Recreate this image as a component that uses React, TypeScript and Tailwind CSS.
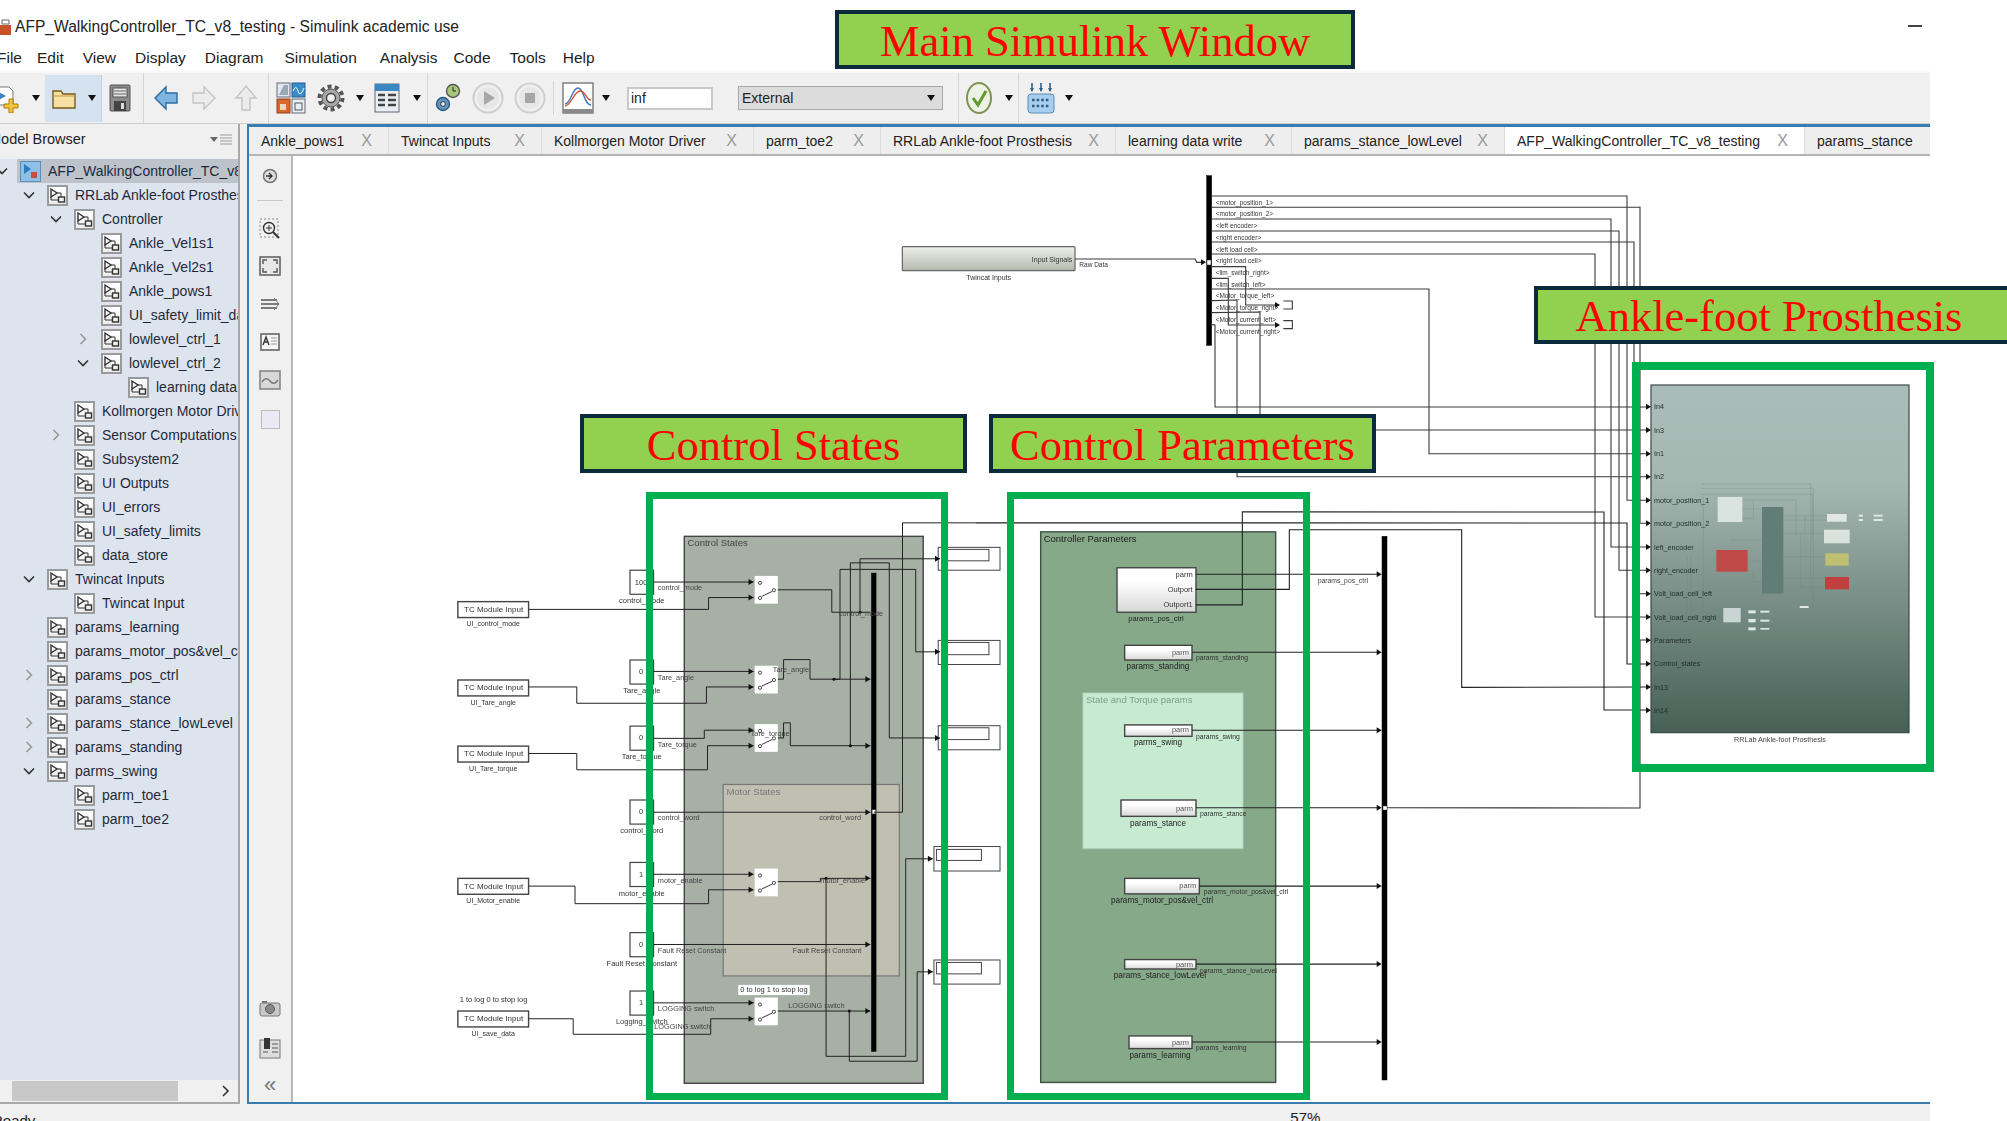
import React from "react";

type P = [number, number];
const z4 = (x: number, y: number): P => [440 + x / 2.8, 480 + y / 2.45];
const z5 = (x: number, y: number): P => [1000 + x / 3, 480 + y / 2.45];
const z6 = (x: number, y: number): P => [1600 + x / 3, 360 + y / 3];
const z9 = (x: number, y: number): P => [880 + x / 3, 170 + y / 3];

const Wire = ({ pts, color = "#3a3a3a", w = 1.1 }: { pts: P[]; color?: string; w?: number }) => (
  <polyline points={pts.map((p) => p.join(",")).join(" ")} fill="none" stroke={color} strokeWidth={w} />
);
const Arrow = ({ at }: { at: P }) => (
  <polygon points={`${at[0]},${at[1]} ${at[0] - 5},${at[1] - 3} ${at[0] - 5},${at[1] + 3}`} fill="#111" />
);
const Dot = ({ at }: { at: P }) => <circle cx={at[0]} cy={at[1]} r={1.5} fill="#111" />;
const T = ({ at, s = 7.5, a = "start", c = "#333", children }: { at: P; s?: number; a?: "start" | "middle" | "end"; c?: string; children: React.ReactNode }) => (
  <text x={at[0]} y={at[1]} fontSize={s} textAnchor={a} fill={c} dominantBaseline="central">{children}</text>
);
const Box = ({ a, b, fill = "#fff", stroke = "#444", w = 1.2, r = 0 }: { a: P; b: P; fill?: string; stroke?: string; w?: number; r?: number }) => (
  <rect x={a[0]} y={a[1]} width={b[0] - a[0]} height={b[1] - a[1]} fill={fill} stroke={stroke} strokeWidth={w} rx={r} />
);

const tcBlocks: [number, string][] = [
  [298, "UI_control_mode"], [490, "UI_Tare_angle"], [652, "UI_Tare_torque"], [976, "UI_Motor_enable"], [1301, "UI_save_data"],
];
const constants: [number, string, string][] = [
  [221, "100", "control_mode"], [441, "0", "Tare_angle"], [603, "0", "Tare_torque"], [784, "0", "control_word"],
  [937, "1", "motor_enable"], [1109, "0", "Fault Reset Constant"], [1252, "1", "Logging_switch"],
];
const switches = [235, 455, 598, 952, 1268];

const wires4: P[][] = [
  [[598, 250], [878, 250]],
  [[248, 317], [752, 317], [752, 288], [878, 288]],
  [[946, 269], [1097, 269], [1097, 324], [1205, 324]],
  [[598, 469], [878, 469]],
  [[248, 507], [383, 507], [383, 547], [746, 547], [746, 507], [878, 507]],
  [[946, 488], [962, 488], [962, 440], [1036, 440], [1036, 488], [1205, 488]],
  [[598, 633], [740, 633], [740, 613], [878, 613]],
  [[248, 670], [383, 670], [383, 710], [749, 710], [749, 651], [878, 651]],
  [[946, 632], [962, 632], [962, 595], [981, 595], [981, 651], [1205, 651]],
  [[598, 814], [1205, 814]],
  [[1215, 814], [1295, 814], [1295, 105], [1500, 105]],
  [[1176, 324], [1176, 193], [1400, 193]],
  [[1103, 488], [1120, 488], [1120, 219], [1332, 219], [1332, 421], [1400, 421]],
  [[1149, 651], [1149, 203], [1258, 203], [1258, 632], [1400, 632]],
  [[598, 966], [878, 966]],
  [[248, 995], [378, 995], [378, 1038], [752, 1038], [752, 1004], [878, 1004]],
  [[946, 984], [1065, 984], [1065, 976], [1205, 976]],
  [[1081, 976], [1081, 1412], [1304, 1412], [1304, 928], [1380, 928]],
  [[598, 1138], [1205, 1138]],
  [[598, 1281], [878, 1281]],
  [[248, 1320], [373, 1320], [373, 1358], [758, 1358], [758, 1320], [878, 1320]],
  [[946, 1301], [1205, 1301]],
  [[1146, 1301], [1146, 1424], [1336, 1424], [1336, 1205], [1380, 1205]],
];
const arrows4: P[] = [
  [878, 250], [878, 288], [878, 469], [878, 507], [878, 613], [878, 651], [878, 966], [878, 1004], [878, 1281], [878, 1320],
  [1205, 488], [1205, 651], [1205, 814], [1205, 976], [1205, 1138], [1205, 1301], [1400, 193], [1400, 421], [1400, 632], [1380, 928], [1380, 1205],
];
const dots4: P[] = [[1176, 324], [1103, 488], [1149, 651], [1081, 976], [1146, 1301]];
const labels4: [number, number, string][] = [
  [610, 264, "control_mode"], [1117, 326, "control_mode"], [610, 483, "Tare_angle"], [932, 465, "Tare_angle"],
  [610, 647, "Tare_torque"], [870, 622, "Tare_torque"], [610, 828, "control_word"], [1062, 828, "control_word"],
  [610, 980, "motor_enable"], [1065, 980, "motor_enable"], [610, 1153, "Fault Reset Constant"], [988, 1153, "Fault Reset Constant"],
  [610, 1295, "LOGGING switch"], [600, 1338, "LOGGING switch"], [975, 1287, "LOGGING switch"],
];
const displays: [number, number, number, number, number][] = [
  [1395, 165, 221, 170, 198], [1395, 393, 452, 398, 428], [1395, 602, 661, 607, 636], [1383, 898, 958, 905, 932], [1383, 1176, 1235, 1182, 1210],
];

const paramBlocks: [number, number, number, number, number, string, number, number, number, string, number, number][] = [
  [374, 576, 405, 441, 423, "params_standing", 474, 456, 422, "params_standing", 588, 436],
  [374, 576, 600, 628, 612, "parms_swing", 474, 643, 613, "params_swing", 588, 628],
  [363, 588, 784, 824, 804, "params_stance", 474, 841, 803, "params_stance", 600, 818],
  [374, 598, 976, 1014, 994, "params_motor_pos&vel_ctrl", 486, 1030, 995, "params_motor_pos&vel_ctrl", 611, 1009],
  [374, 588, 1175, 1198, 1186, "params_stance_lowLevel", 480, 1214, 1186, "params_stance_lowLevel", 600, 1201],
  [387, 576, 1362, 1393, 1378, "params_learning", 480, 1409, 1377, "params_learning", 588, 1391],
];

const inputs: [number, string][] = [
  [140, "In4"], [210, "In3"], [281, "In1"], [350, "In2"], [421, "motor_position_1"], [490, "motor_position_2"], [561, "left_encoder"],
  [631, "right_encoder"], [701, "Volt_load_cell_left"], [771, "Volt_load_cell_right"], [841, "Parameters"], [911, "Control_states"], [981, "In13"], [1051, "In14"],
];
const busSignals: [number, string][] = [
  [97, "<motor_position_1>"], [130, "<motor_position_2>"], [166, "<left encoder>"], [202, "<right encoder>"], [238, "<left load cell>"], [271, "<right load cell>"],
  [306, "<lim_switch_right>"], [342, "<lim_switch_left>"], [375, "<Motor_torque_left>"], [411, "<Motor_torque_right>"], [447, "<Motor_current_left>"], [483, "<Motor_current_right>"],
];
const innerRects: [number, number, number, number, string][] = [
  [353, 411, 427, 486, "#dbe3e0"], [486, 441, 550, 701, "#627d76"], [349, 570, 443, 635, "#c04a48"], [681, 462, 740, 485, "#e1e8e4"],
  [672, 509, 749, 550, "#d9e2dd"], [676, 580, 746, 617, "#c0bf72"], [675, 651, 747, 688, "#c04040"], [370, 744, 422, 787, "#c9d5d2"],
  [445, 751, 467, 760, "#dfe7e3"], [481, 752, 508, 758, "#dfe7e3"], [445, 777, 467, 787, "#dfe7e3"], [481, 779, 508, 785, "#dfe7e3"],
  [445, 802, 467, 811, "#dfe7e3"], [481, 804, 508, 809, "#dfe7e3"], [776, 464, 789, 470, "#dfe7e3"], [776, 477, 789, 483, "#dfe7e3"],
  [821, 464, 848, 470, "#dfe7e3"], [821, 477, 848, 483, "#dfe7e3"], [599, 738, 626, 744, "#dfe7e3"],
];
const faint: P[][] = [
  [[305, 372], [632, 372], [632, 690]], [[305, 385], [640, 385], [640, 740], [626, 740]], [[305, 403], [637, 403], [637, 545]], [[427, 420], [588, 420], [588, 530]],
  [[427, 475], [460, 475], [460, 420]], [[310, 410], [310, 750], [370, 750]], [[262, 590], [262, 800], [445, 805]], [[272, 590], [272, 780], [445, 780]],
  [[550, 468], [681, 468]], [[550, 480], [681, 480]], [[550, 520], [672, 520]], [[550, 590], [676, 590]], [[550, 655], [675, 655]], [[443, 603], [486, 603]],
  [[390, 540], [486, 540]], [[427, 447], [486, 447]], [[460, 635], [460, 665], [486, 665]], [[602, 520], [602, 682], [675, 682]], [[615, 465], [615, 580]],
];

function Diagram() {
  return (
    <svg viewBox="293 156 1637 946" className="block w-full h-full blur-[0.4px]" fontFamily="'Liberation Sans', Arial, sans-serif">
      <defs>
        <linearGradient id="tw" x1="0" y1="0" x2="0" y2="1"><stop offset="0" stopColor="#eef0ea" /><stop offset="1" stopColor="#b4b8ac" /></linearGradient>
        <linearGradient id="ps" x1="0" y1="0" x2="0" y2="1"><stop offset="0" stopColor="#abbdb8" /><stop offset="0.28" stopColor="#a5b7b1" /><stop offset="1" stopColor="#466056" /></linearGradient>
        <linearGradient id="wb" x1="0" y1="0" x2="0" y2="1"><stop offset="0.3" stopColor="#ffffff" /><stop offset="1" stopColor="#d6d8d6" /></linearGradient>
      </defs>
      <Box a={z9(67, 230)} b={z9(585, 302)} fill="url(#tw)" stroke="#666" r={1} />
      <T at={z9(577, 268)} a="end" s={7}>Input Signals</T>
      <T at={z9(326, 322)} a="middle" s={7}>Twincat Inputs</T>
      <T at={z9(598, 284)} s={6.5}>Raw Data</T>
      <Wire pts={[z9(585, 267), z9(945, 267), z9(950, 277), z9(975, 277)]} />
      <Arrow at={z9(978, 277)} />
      <Box a={z9(980, 17)} b={z9(995, 526)} fill="#000" stroke="#000" w={0.5} />
      <rect x={1207} y={260} width={4} height={5} fill="#fff" stroke="#333" strokeWidth={0.5} />
      {busSignals.map(([y, s]) => <T key={s} at={z9(1007, y)} s={6.5}>{s}</T>)}
      <Wire pts={[[1212, 196], [1627, 196], [1627, 500.3], [1646, 500.3]]} />
      <Wire pts={[[1212, 207.3], [1640, 207.3], [1640, 523.3], [1646, 523.3]]} />
      <Wire pts={[[1212, 219], [1611, 219], [1611, 547], [1646, 547]]} />
      <Wire pts={[[1212, 231], [1619, 231], [1619, 570.3], [1646, 570.3]]} />
      <Wire pts={[[1212, 242], [1634, 242], [1634, 593.7], [1646, 593.7]]} />
      <Wire pts={[[1212, 254], [1595, 254], [1595, 617], [1646, 617]]} />
      <Wire pts={[z9(995, 357), [1429, 289], [1429, 453.7], [1646, 453.7]]} />
      <Wire pts={[z9(995, 392), [1237, 300], [1237, 476.7], [1646, 476.7]]} />
      <Wire pts={[z9(995, 428), [1260, 312], [1260, 430], [1646, 430]]} />
      <Wire pts={[z9(995, 464), [1215, 325], [1215, 407], [1646, 407]]} />
      <Wire pts={[z9(995, 290), z9(1097, 290), z9(1097, 405), z9(1190, 405)]} />
      <Wire pts={[z9(995, 325), z9(1045, 325), z9(1045, 465), z9(1190, 465)]} />
      <Arrow at={z9(1200, 405)} /><Arrow at={z9(1200, 465)} />
      <Wire pts={[z9(1210, 393), z9(1237, 393), z9(1237, 417), z9(1210, 417)]} />
      <Wire pts={[z9(1210, 452), z9(1237, 452), z9(1237, 476), z9(1210, 476)]} />

      {displays.map(([x, y1, y2, i1, i2]) => (
        <g key={y1}>
          <Box a={z4(x, y1)} b={z4(1568, y2)} w={1} />
          <Box a={z4(x === 1395 ? 1420 : 1390, i1)} b={z4(x === 1395 ? 1537 : 1516, i2)} w={1} />
        </g>
      ))}
      <Box a={z4(684, 138)} b={z4(1353, 1478)} fill="#a6b0a5" stroke="#444" w={1.4} />
      <T at={z4(693, 153)} s={9.5} c="#444">Control States</T>
      <Box a={z4(793, 746)} b={z4(1286, 1215)} fill="#c0c0b2" stroke="#777" />
      <T at={z4(802, 762)} s={9.5} c="#777">Motor States</T>
      {tcBlocks.map(([y, l]) => (
        <g key={l}>
          <Box a={z4(50, y)} b={z4(248, y + 39)} w={1.4} />
          <T at={z4(150, y + 19)} a="middle" s={8}>TC Module Input</T>
          <T at={z4(149, y + 54)} a="middle" s={7}>{l}</T>
        </g>
      ))}
      <T at={z4(150, 1273)} a="middle" s={7.5}>1 to log 0 to stop log</T>
      {constants.map(([y, v, l]) => (
        <g key={l}>
          <Box a={z4(532, y)} b={z4(598, y + 59)} w={1.2} />
          <T at={z4(563, y + 29)} a="middle" s={7.5}>{v}</T>
          <T at={z4(565, y + 75)} a="middle" s={7.5}>{l}</T>
        </g>
      ))}
      {switches.map((y) => (
        <g key={y}>
          <Box a={z4(881, y)} b={z4(946, y + 68)} stroke="#fff" w={0} />
          <circle cx={z4(896, 0)[0]} cy={z4(0, y + 17)[1]} r={1.6} fill="#fff" stroke="#222" strokeWidth={0.8} />
          <circle cx={z4(896, 0)[0]} cy={z4(0, y + 54)[1]} r={1.6} fill="#fff" stroke="#222" strokeWidth={0.8} />
          <circle cx={z4(935, 0)[0]} cy={z4(0, y + 35)[1]} r={1.6} fill="#fff" stroke="#222" strokeWidth={0.8} />
          <Wire pts={[z4(901, y + 50), z4(930, y + 38)]} color="#222" w={0.9} />
        </g>
      ))}
      <Box a={z4(835, 1237)} b={z4(1035, 1262)} stroke="#fff" w={0} />
      <T at={z4(935, 1249)} a="middle" s={7.5}>0 to log 1 to stop log</T>
      <Box a={z4(1208, 228)} b={z4(1221, 1400)} fill="#000" stroke="#000" w={0.5} />
      <rect x={z4(1210, 0)[0]} y={z4(0, 808)[1]} width={3.5} height={4} fill="#fff" stroke="#444" strokeWidth={0.4} />
      {wires4.map((w, i) => <Wire key={i} pts={w.map(([x, y]) => z4(x, y))} w={1} color="#222" />)}
      {arrows4.map(([x, y], i) => <Arrow key={i} at={z4(x, y)} />)}
      {dots4.map(([x, y], i) => <Dot key={i} at={z4(x, y)} />)}
      {labels4.map(([x, y, l], i) => <T key={i} at={z4(x, y)} s={7.3} c="#444">{l}</T>)}

      <Box a={z5(122, 127)} b={z5(827, 1476)} fill="#86a98a" stroke="#3d5240" w={1.4} />
      <T at={z5(131, 143)} s={9.5} c="#222">Controller Parameters</T>
      <Box a={z5(248, 521)} b={z5(730, 904)} fill="#c6ebd0" stroke="#9cb9a4" w={1} />
      <T at={z5(258, 538)} s={9.5} c="#7f9e8c">State and Torque params</T>
      <Box a={z5(351, 215)} b={z5(588, 324)} fill="url(#wb)" w={1.4} />
      <T at={z5(578, 231)} a="end" s={7.5}>parm</T>
      <T at={z5(578, 268)} a="end" s={7.5}>Outport</T>
      <T at={z5(578, 305)} a="end" s={7.5}>Outport1</T>
      <T at={z5(468, 339)} a="middle" s={7.5} c="#222">params_pos_ctrl</T>
      <Wire pts={[z5(587, 231), z5(1140, 231)]} color="#222" />
      <Wire pts={[z5(587, 268), z5(868, 268), z5(868, 122), z5(1385, 122), z5(1385, 508), [1646, 687]]} color="#222" />
      <Wire pts={[z5(587, 306), z5(727, 306), z5(727, 78), [1604, 512], [1604, 710], [1646, 710]]} color="#222" />
      <Wire pts={[z4(1500, 105), [1627, 523], [1627, 664], [1646, 664]]} color="#222" />
      <Arrow at={z5(1145, 231)} />
      <T at={z5(953, 246)} s={6.8} c="#444">params_pos_ctrl</T>
      {paramBlocks.map(([x1, x2, y1, y2, py, l, lx, ly, wy, wl, wx, wly]) => (
        <g key={l}>
          <Box a={z5(x1, y1)} b={z5(x2, y2)} fill="url(#wb)" w={1.4} />
          <T at={z5(x2 - 9, py)} a="end" s={7.5} c="#555">parm</T>
          <T at={z5(lx, ly)} a="middle" s={8.2} c="#222">{l}</T>
          <Wire pts={[z5(x2, wy), z5(1140, wy)]} color="#222" />
          <Arrow at={z5(1145, wy)} />
          <T at={z5(wx, wly)} s={6.8} c="#333">{wl}</T>
        </g>
      ))}
      <Box a={z5(1146, 138)} b={z5(1161, 1470)} fill="#000" stroke="#000" w={0.5} />
      <rect x={1383} y={806} width={4} height={4} fill="#fff" stroke="#444" strokeWidth={0.5} />
      <Wire pts={[z5(1161, 803), [1640, 808], [1640, 640], [1646, 640]]} color="#333" />

      <Box a={z6(153, 75)} b={z6(927, 1118)} fill="url(#ps)" stroke="#3a4a46" w={1.2} />
      {faint.map((w, i) => <Wire key={i} pts={w.map(([x, y]) => z6(x, y))} color="#6f8a84" w={0.35} />)}
      {innerRects.map(([a, b, c, d, f], i) => <rect key={i} x={z6(a, 0)[0]} y={z6(0, b)[1]} width={(c - a) / 3} height={(d - b) / 3} fill={f} />)}
      {inputs.map(([y, l]) => (
        <g key={l}>
          <Arrow at={z6(153, y)} />
          <T at={z6(162, y)} s={7.2} c="#1f2d28">{l}</T>
        </g>
      ))}
      <T at={z6(540, 1137)} a="middle" s={7.2} c="#444">RRLab Ankle-foot Prosthesis</T>
    </svg>
  );
}

const Caret = ({ c = "" }: { c?: string }) => (
  <svg width="10" height="8" viewBox="0 0 10 8" className={c}><polygon points="1,1 9,1 5,7" fill="#111" /></svg>
);
const Sep = ({ c }: { c: string }) => <div className={`w-px self-stretch bg-[#d4d4d4] ${c}`} />;

const ToolIcons = {
  newM: <svg width="28" height="30" viewBox="0 0 28 30"><path d="M4 4h14l4 4v14H4z" fill="#fff" stroke="#777" /><path d="M6 8l9 5-9 5z" fill="#3b83c4" /><path d="M18 16h4v5h5v4h-5v5h-4v-5h-5v-4h5z" fill="#f3c53a" stroke="#a77c10" /></svg>,
  folder: <svg width="26" height="24" viewBox="0 0 26 24"><path d="M2 5h8l2 3h12v14H2z" fill="#f6e0a3" stroke="#7b5a20" strokeWidth="1.4" /><path d="M2 10h22" stroke="#c49a3c" /></svg>,
  save: <svg width="22" height="28" viewBox="0 0 22 28"><rect x="1" y="1" width="20" height="26" rx="1" fill="#8b8b8b" stroke="#555" /><rect x="4" y="4" width="14" height="9" fill="#e4e4e4" stroke="#555" /><path d="M5 7h12M5 10h12" stroke="#666" /><rect x="5" y="17" width="12" height="10" fill="#444" /><rect x="12" y="19" width="3" height="6" fill="#ddd" /></svg>,
  back: <svg width="26" height="28" viewBox="0 0 26 28"><path d="M2 14L13 3v6h11v10H13v6z" fill="#7db4e0" stroke="#2f6c9e" strokeWidth="1.4" /></svg>,
  fwd: <svg width="26" height="28" viewBox="0 0 26 28"><path d="M24 14L13 3v6H2v10h11v6z" fill="#ececec" stroke="#c4c4c4" strokeWidth="1.4" /></svg>,
  up: <svg width="24" height="28" viewBox="0 0 24 28"><path d="M12 2L22 14h-6v12H8V14H2z" fill="#ececec" stroke="#c4c4c4" strokeWidth="1.4" /></svg>,
  lib: <svg width="30" height="32" viewBox="0 0 30 32"><rect x="1" y="1" width="13" height="14" fill="#dfe7ef" stroke="#667" /><path d="M3 13L8 3h4v10z" fill="#9aa7b4" /><rect x="16" y="1" width="13" height="14" fill="#3a8cc8" stroke="#245f8e" /><path d="M17 9q3-7 5 0t6-3" stroke="#fff" fill="none" /><rect x="1" y="17" width="13" height="14" fill="#d9662b" stroke="#96411a" /><rect x="4" y="22" width="6" height="6" fill="#f4d3bd" /><rect x="16" y="17" width="13" height="14" fill="#e9eef2" stroke="#667" /><rect x="19" y="21" width="7" height="7" fill="none" stroke="#556" /></svg>,
  gear: <svg width="30" height="32" viewBox="0 0 30 32"><circle cx="15" cy="16" r="11.5" fill="none" stroke="#555" strokeWidth="4" strokeDasharray="4 3.2" /><circle cx="15" cy="16" r="9" fill="#a8a8a8" stroke="#555" /><circle cx="15" cy="16" r="4.5" fill="#f0f0f0" stroke="#444" strokeWidth="1.4" /></svg>,
  cfg: <svg width="26" height="30" viewBox="0 0 26 30"><rect x="1" y="1" width="24" height="28" fill="#e9eef2" stroke="#667" /><rect x="1" y="1" width="24" height="7" fill="#3b87c4" /><path d="M4 12h7M14 12h8M4 17h7M14 17h8M4 22h7M14 22h8" stroke="#444" strokeWidth="2.4" /></svg>,
  step: <svg width="26" height="32" viewBox="0 0 26 32"><circle cx="18" cy="9" r="6.5" fill="#a9c77a" stroke="#555" strokeWidth="1.4" /><path d="M18 5v4h3" stroke="#222" fill="none" /><circle cx="8" cy="22" r="6.5" fill="#5e95c2" stroke="#2c5878" strokeWidth="1.4" /><circle cx="8" cy="22" r="2.4" fill="#e8eef2" stroke="#333" /></svg>,
  run: <svg width="32" height="32" viewBox="0 0 32 32"><circle cx="16" cy="16" r="14.5" fill="#f0f0f0" stroke="#cfcfcf" strokeWidth="2" /><circle cx="16" cy="16" r="11" fill="#e6e6e6" /><path d="M12 9l11 7-11 7z" fill="#a6a6a6" /></svg>,
  stop: <svg width="32" height="32" viewBox="0 0 32 32"><circle cx="16" cy="16" r="14.5" fill="#f0f0f0" stroke="#cfcfcf" strokeWidth="2" /><circle cx="16" cy="16" r="11" fill="#e6e6e6" /><rect x="11" y="11" width="10" height="10" fill="#a6a6a6" /></svg>,
  scope: <svg width="32" height="32" viewBox="0 0 32 32"><rect x="1" y="1" width="30" height="30" fill="#fff" stroke="#777" strokeWidth="1.4" /><rect x="1" y="27" width="30" height="4" fill="#8a8a8a" /><path d="M3 22C9 22 10 6 16 6s6 17 13 17" stroke="#3b78c4" fill="none" strokeWidth="1.4" /><path d="M3 24C9 24 12 9 18 9s6 9 11 9" stroke="#d9512c" fill="none" strokeWidth="1.4" /></svg>,
  check: <svg width="26" height="32" viewBox="0 0 26 32"><ellipse cx="13" cy="16" rx="12" ry="15" fill="#eef2e4" stroke="#7f9354" strokeWidth="2" /><path d="M7 16l5 7 8-14" stroke="#5f9a2e" strokeWidth="3" fill="none" /></svg>,
  cal: <svg width="28" height="32" viewBox="0 0 28 32"><path d="M5 1v8M14 1v8M23 1v8" stroke="#2f5f88" strokeWidth="1.6" /><path d="M3 6l2 4 2-4zM12 6l2 4 2-4zM21 6l2 4 2-4z" fill="#2f5f88" /><rect x="1" y="12" width="26" height="19" rx="3" fill="#a9cdee" stroke="#5a8cb8" /><path d="M5 18h18M5 24h18" stroke="#2f5f88" strokeWidth="2.6" strokeDasharray="2.6 2" /></svg>,
};

const Glyph = () => (
  <div className="w-[21px] h-[21px] shrink-0 border-2 border-[#9a9a9a] bg-gradient-to-b from-white to-[#ececec] flex items-center justify-center">
    <svg width="17" height="17" viewBox="0 0 17 17"><path d="M2 2l6 4-6 4z" fill="none" stroke="#333" strokeWidth="1.4" /><rect x="9.5" y="10" width="6" height="5" fill="none" stroke="#333" strokeWidth="1.4" /><path d="M8 6h4v4M2 10v3h7" fill="none" stroke="#333" /></svg>
  </div>
);
const Chev = ({ k }: { k: string }) => (
  <svg width="14" height="14" viewBox="0 0 14 14" className="shrink-0">
    {k === "d" && <path d="M2 4.5l5 5 5-5" fill="none" stroke="#333" strokeWidth="1.6" />}
    {k === "r" && <path d="M4.5 2l5 5-5 5" fill="none" stroke="#999" strokeWidth="1.6" />}
  </svg>
);

const levelClass = ["-ml-[5px]", "pl-[22px]", "pl-[49px]", "pl-[76px]", "pl-[103px]"];
const tree: [number, string, string][] = [
  [0, "d", "AFP_WalkingController_TC_v8_testing"], [1, "d", "RRLab Ankle-foot Prosthesis"], [2, "d", "Controller"], [3, "", "Ankle_Vel1s1"], [3, "", "Ankle_Vel2s1"],
  [3, "", "Ankle_pows1"], [3, "", "UI_safety_limit_data"], [3, "r", "lowlevel_ctrl_1"], [3, "d", "lowlevel_ctrl_2"], [4, "", "learning data write"],
  [2, "", "Kollmorgen Motor Driver"], [2, "r", "Sensor Computations"], [2, "", "Subsystem2"], [2, "", "UI Outputs"], [2, "", "UI_errors"], [2, "", "UI_safety_limits"],
  [2, "", "data_store"], [1, "d", "Twincat Inputs"], [2, "", "Twincat Input"], [1, "", "params_learning"], [1, "", "params_motor_pos&vel_ctrl"], [1, "r", "params_pos_ctrl"],
  [1, "", "params_stance"], [1, "r", "params_stance_lowLevel"], [1, "r", "params_standing"], [1, "d", "parms_swing"], [2, "", "parm_toe1"], [2, "", "parm_toe2"],
];

const tabs: [string, string][] = [
  ["Ankle_pows1", "w-[140px]"], ["Twincat Inputs", "w-[153px]"], ["Kollmorgen Motor Driver", "w-[212px]"], ["parm_toe2", "w-[127px]"], ["RRLab Ankle-foot Prosthesis", "w-[235px]"],
  ["learning data write", "w-[176px]"], ["params_stance_lowLevel", "w-[213px]"], ["AFP_WalkingController_TC_v8_testing", "w-[300px]"], ["params_stance", "w-[125px]"],
];

const menu: [string, string][] = [
  ["File", "-ml-[3px]"], ["Edit", "ml-[15px]"], ["View", "ml-[19px]"], ["Display", "ml-[19px]"], ["Diagram", "ml-[19px]"], ["Simulation", "ml-[21px]"],
  ["Analysis", "ml-[23px]"], ["Code", "ml-[16px]"], ["Tools", "ml-[19px]"], ["Help", "ml-[17px]"],
];

const Note = ({ c, children }: { c: string; children: React.ReactNode }) => (
  <div className={`absolute flex items-center justify-center border-[4px] border-[#0b2a3c] bg-[#92d050] text-[#ff0000] text-[44.5px] pt-[3px] font-['Liberation_Serif',serif] ${c}`}>{children}</div>
);

export default function App() {
  return (
    <div className="relative w-[2007px] h-[1121px] overflow-hidden bg-white font-['Liberation_Sans',Arial,sans-serif] text-[#222]">
      <div className="flex flex-col w-[1930px] h-full">
        <div className="h-[45px] flex items-center text-[15.6px] pt-[8px]">
          <svg width="14" height="18" viewBox="0 0 14 18" className="-ml-[1px] mr-[2px]"><path d="M3 2h7v4H3z" fill="none" stroke="#666" /><rect x="0" y="7" width="12" height="10" fill="#c8512a" /></svg>
          <span>AFP_WalkingController_TC_v8_testing - Simulink academic use</span>
        </div>
        <div className="h-[26px] flex items-center text-[15.5px]">
          {menu.map(([m, c]) => <span key={m} className={c}>{m}</span>)}
        </div>
        <div className="h-[53px] flex items-center bg-[#f0f0f0] border-t-2 border-[#f8f8f8] -ml-[9px] border-b border-b-[#cfcfcf]">
          <div className="w-[28px] flex justify-center">{ToolIcons.newM}</div>
          <Caret c="ml-[12px]" />
          <div className="ml-[4px] w-[57px] h-[47px] bg-[#d5e3f0] flex items-center justify-between pl-[6px] pr-[4px] border-r border-r-[#c0d3e4]">
            {ToolIcons.folder}
            <Caret />
          </div>
          <div className="ml-[6px] w-[24px] flex justify-center">{ToolIcons.save}</div>
          <Sep c="ml-[11px]" />
          <div className="ml-[8px] w-[28px] flex justify-center">{ToolIcons.back}</div>
          <div className="ml-[10px] w-[28px] flex justify-center">{ToolIcons.fwd}</div>
          <div className="ml-[14px] w-[28px] flex justify-center">{ToolIcons.up}</div>
          <Sep c="ml-[8px]" />
          <div className="ml-[7px] w-[30px] flex justify-center">{ToolIcons.lib}</div>
          <div className="ml-[10px] w-[30px] flex justify-center">{ToolIcons.gear}</div>
          <Caret c="ml-[9px]" />
          <div className="ml-[7px] w-[30px] flex justify-center">{ToolIcons.cfg}</div>
          <Caret c="ml-[10px]" />
          <Sep c="ml-[5px]" />
          <div className="ml-[7px] w-[26px] flex justify-center">{ToolIcons.step}</div>
          <div className="ml-[10px] w-[34px] flex justify-center">{ToolIcons.run}</div>
          <div className="ml-[8px] w-[34px] flex justify-center">{ToolIcons.stop}</div>
          <Sep c="ml-[6px] my-[8px]" />
          <div className="ml-[8px] w-[32px] flex justify-center">{ToolIcons.scope}</div>
          <Caret c="ml-[7px]" />
          <div className="ml-[16px] w-[86px] h-[23px] bg-white border-2 border-[#c8c8c8] flex items-center pl-[2px] text-[14px]">inf</div>
          <div className="ml-[25px] w-[205px] h-[24px] bg-[#dcdcdc] border border-[#a8a8a8] flex items-center justify-between pl-[3px] pr-[6px] text-[14px]">
            <span>External</span>
            <Caret />
          </div>
          <Sep c="ml-[15px]" />
          <div className="ml-[5px] w-[30px] flex justify-center">{ToolIcons.check}</div>
          <Caret c="ml-[10px]" />
          <Sep c="ml-[4px]" />
          <div className="ml-[8px] w-[28px] flex justify-center">{ToolIcons.cal}</div>
          <Caret c="ml-[9px]" />
        </div>
        <div className="flex-1 flex min-h-0 bg-[#f0f0f0]">
          <div className="w-[240px] flex flex-col border-r-2 border-r-[#a8a8a8] border-b-2 border-b-[#a8a8a8] overflow-hidden">
            <div className="h-[35px] flex items-center justify-between text-[14.5px] shrink-0 -ml-[11px] pr-[5px] pb-[4px]">
              <span>Model Browser</span>
              <svg width="24" height="14" viewBox="0 0 24 14"><polygon points="1,4 9,4 5,9" fill="#666" /><path d="M11 2h12M11 5h12M11 8h12M11 11h12" stroke="#999" /></svg>
            </div>
            <div className="flex-1 bg-[#dee4ed] min-h-0 overflow-hidden">
              {tree.map(([lvl, ch, name], i) => (
                <div key={i} className="h-[24px] flex items-center whitespace-nowrap text-[14px] text-[#1e2a3c] relative">
                  {i === 0 && <div className="absolute left-[17px] right-0 top-0 bottom-0 bg-[#bcc3cb]" />}
                  <div className={`relative flex items-center ${levelClass[lvl]}`}>
                    <Chev k={ch} />
                    <div className="ml-[11px]">
                      {i === 0 ? (
                        <div className="w-[21px] h-[21px] border border-[#5c8fb8] bg-[#8ec0e6] flex items-center justify-center">
                          <svg width="17" height="17" viewBox="0 0 17 17"><path d="M2 1l7 5-7 5z" fill="#2b7cc0" /><rect x="9" y="9" width="6" height="6" fill="#c05040" /></svg>
                        </div>
                      ) : <Glyph />}
                    </div>
                    <span className="ml-[7px]">{name}</span>
                  </div>
                </div>
              ))}
            </div>
            <div className="h-[22px] shrink-0 flex items-center bg-[#f0f0f0] relative">
              <div className="ml-[12px] w-[166px] h-[20px] bg-[#c8c8c8]" />
              <svg width="10" height="14" viewBox="0 0 10 14" className="ml-[43px]"><path d="M2 2l5 5-5 5" fill="none" stroke="#333" strokeWidth="1.6" /></svg>
            </div>
          </div>
          <div className="ml-[7px] flex-1 flex flex-col border-t-[3px] border-b-2 border-l-2 border-[#3a7cad] min-w-0 bg-white">
            <div className="h-[29px] shrink-0 flex bg-[#eeeeee] border-b-2 border-b-[#b4b4b4]">
              {tabs.map(([t, w], i) => (
                <div key={t} className={`${w} shrink-0 flex items-center justify-between pl-[12px] pr-[16px] pt-[1px] text-[14px] whitespace-nowrap border-r border-r-[#dcdcdc] ${i === 7 ? "bg-white" : ""} ${i === 8 ? "border-r-0" : ""}`}>
                  <span>{t}</span>
                  {i !== 8 && <span className="text-[#999] text-[16px]">X</span>}
                </div>
              ))}
            </div>
            <div className="flex-1 flex min-h-0">
              <div className="w-[44px] shrink-0 bg-[#f0f0f0] border-r-2 border-r-[#b8b8b8] flex flex-col items-center pt-[12px]">
                <svg width="16" height="16" viewBox="0 0 16 16"><circle cx="8" cy="8" r="6.5" fill="#ddd" stroke="#777" strokeWidth="1.5" /><path d="M4 8h6M7 5l3 3-3 3" fill="none" stroke="#333" strokeWidth="1.4" /></svg>
                <div className="w-[26px] h-px bg-[#c8c8c8] mt-[16px]" />
                <svg width="22" height="22" viewBox="0 0 22 22" className="mt-[17px]"><rect x="1" y="1" width="18" height="18" fill="none" stroke="#888" strokeDasharray="2 2" /><circle cx="10" cy="10" r="5.5" fill="#eee" stroke="#333" strokeWidth="1.4" /><path d="M7 10h6M10 7v6" stroke="#333" /><path d="M14 14l6 6" stroke="#333" strokeWidth="2" /></svg>
                <svg width="22" height="20" viewBox="0 0 22 20" className="mt-[16px]"><rect x="1" y="1" width="20" height="18" fill="#e8e8e8" stroke="#666" strokeWidth="1.6" /><path d="M4 8V4h4M18 8V4h-4M4 12v4h4M18 12v4h-4" fill="none" stroke="#555" strokeWidth="1.4" /></svg>
                <svg width="20" height="14" viewBox="0 0 20 14" className="mt-[21px]"><path d="M1 3h16M1 7h18M1 11h16" stroke="#555" strokeWidth="1.4" /><path d="M14 1l5 6-5 6" fill="none" stroke="#777" /></svg>
                <svg width="20" height="18" viewBox="0 0 20 18" className="mt-[22px]"><rect x="1" y="1" width="18" height="16" fill="#f5f5f5" stroke="#666" strokeWidth="1.6" /><path d="M3 12l3-8 3 8M4 9h4" fill="none" stroke="#333" strokeWidth="1.4" /><path d="M11 5h6M11 8h6M11 11h6" stroke="#999" /></svg>
                <svg width="22" height="20" viewBox="0 0 22 20" className="mt-[19px]"><rect x="1" y="1" width="20" height="18" fill="#d8d8d8" stroke="#888" strokeWidth="1.6" /><path d="M3 12q4-6 8-1t8-1" fill="none" stroke="#777" strokeWidth="1.4" /></svg>
                <div className="w-[19px] h-[19px] mt-[20px] bg-[#eaeaf4] border border-[#bbb]" />
                <svg width="22" height="17" viewBox="0 0 22 17" className="mt-auto"><rect x="1" y="3" width="20" height="13" rx="2" fill="#c8c8c8" stroke="#777" /><circle cx="11" cy="9" r="4.5" fill="#888" stroke="#555" /><rect x="3" y="1" width="5" height="2" fill="#777" /></svg>
                <svg width="22" height="21" viewBox="0 0 22 21" className="mt-[21px]"><rect x="1" y="2" width="20" height="18" fill="#ddd" stroke="#777" /><rect x="5" y="0" width="6" height="11" fill="#333" /><path d="M13 6h6M13 10h6M4 14h5M13 14h6" stroke="#999" strokeWidth="2" /></svg>
                <span className="mt-[16px] mb-[7px] text-[22px] leading-[20px] text-[#777]">«</span>
              </div>
              <div className="flex-1 min-w-0 bg-white">
                <Diagram />
              </div>
            </div>
          </div>
        </div>
        <div className="h-[17px] shrink-0 bg-[#f0f0f0] flex items-start text-[15px] leading-[17px] overflow-hidden">
          <span className="-ml-[8px] mt-[8px]">Ready</span>
          <span className="ml-[1255px] mt-[5px]">57%</span>
        </div>
      </div>

      <div className="absolute left-[1908px] top-[25px] w-[14px] h-[2px] bg-[#444]" />
      <div className="absolute left-[646px] top-[492px] w-[302px] h-[608px] border-[7px] border-[#00b050]" />
      <div className="absolute left-[1007px] top-[492px] w-[303px] h-[608px] border-[7px] border-[#00b050]" />
      <div className="absolute left-[1632px] top-[362px] w-[302px] h-[410px] border-[8px] border-[#00b050]" />
      <Note c="left-[835px] top-[10px] w-[520px] h-[59px]">Main Simulink Window</Note>
      <Note c="left-[1534px] top-[286px] w-[480px] h-[58px] pr-[10px]">Ankle-foot Prosthesis</Note>
      <Note c="left-[580px] top-[414px] w-[387px] h-[59px]">Control States</Note>
      <Note c="left-[989px] top-[414px] w-[387px] h-[59px]">Control Parameters</Note>
    </div>
  );
}
